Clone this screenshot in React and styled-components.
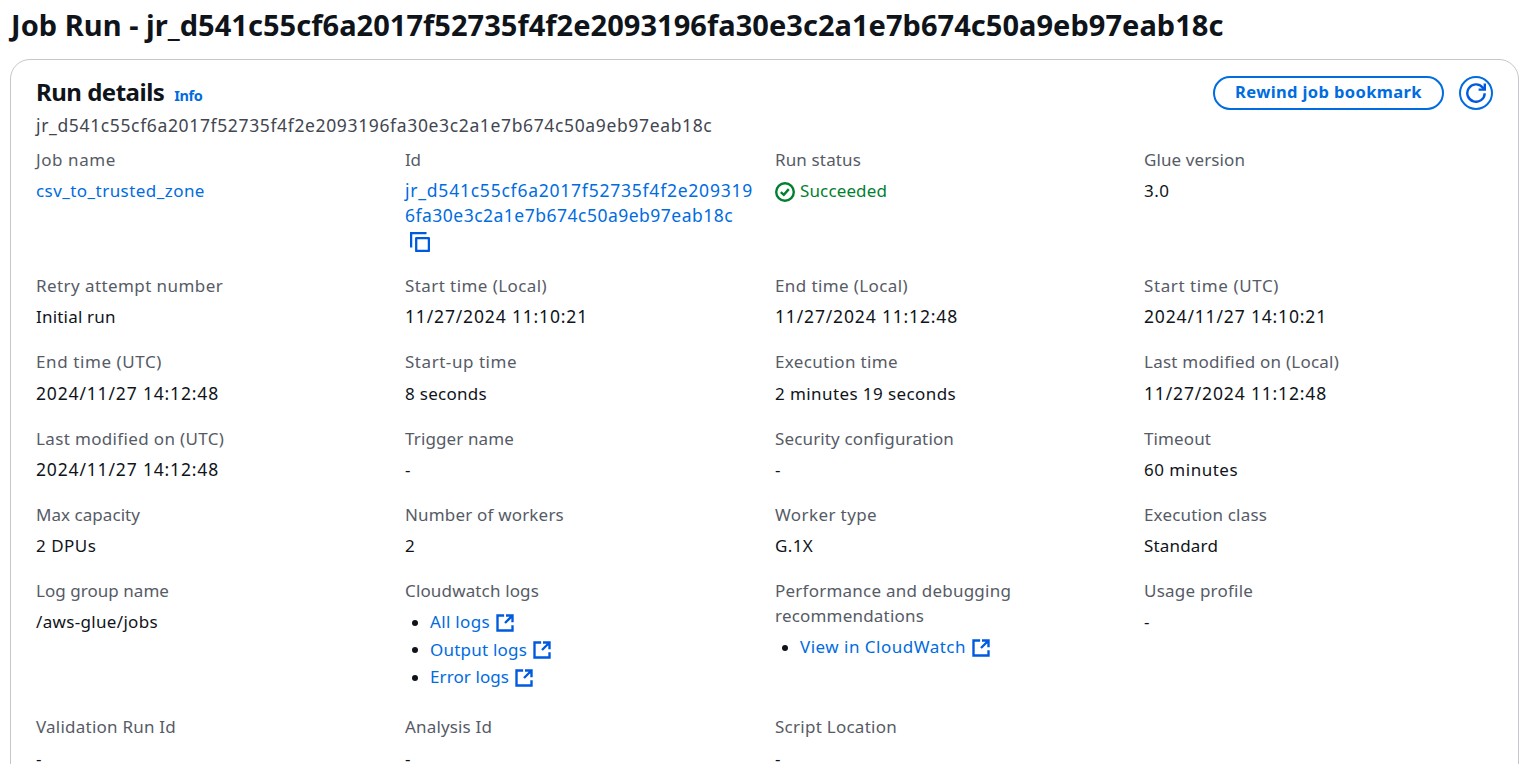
import React from 'react';
import styled, { createGlobalStyle, css } from 'styled-components';

const LINK = '#006ce0';
const ICON = '#005ae0';

const GlobalStyle = createGlobalStyle`
  * { box-sizing: border-box; }
  html, body { margin: 0; height: 100%; overflow: hidden; background: #fff; }
  body {
    font-family: "Noto Sans", "Open Sans", sans-serif;
    font-size: 17px;
    line-height: 25px;
    color: #0f141a;
  }
`;

const Page = styled.main`
  height: 764px;
  overflow: hidden;
  padding: 6px 1px 0 10px;
`;

const PageTitle = styled.h1`
  margin: 0 0 15px;
  padding-left: 1px;
  font-size: 29px;
  line-height: 38px;
  font-weight: 700;
  letter-spacing: 0.04px;
  white-space: nowrap;
`;

const Card = styled.section`
  height: 800px;
  border: 1px solid #c6c6cd;
  border-radius: 20px;
  padding: 16px 25px 0;
`;

const CardHeader = styled.header`
  display: flex;
  justify-content: space-between;
  align-items: flex-start;
`;

const HeadingRow = styled.div`
  display: flex;
  align-items: baseline;
  gap: 10px;
  height: 36px;
`;

const CardTitle = styled.h2`
  margin: 0;
  font-size: 24px;
  line-height: 32px;
  font-weight: 700;
  letter-spacing: -0.5px;
`;

const InfoLink = styled.a`
  font-size: 14.5px;
  font-weight: 700;
  letter-spacing: -0.4px;
  color: ${LINK};
`;

const Description = styled.p`
  margin: 0;
  font-size: 17.5px;
  line-height: 26px;
  height: 25px;
  color: #424650;
  letter-spacing: 0.64px;
`;

const Actions = styled.div`
  display: flex;
  gap: 15px;
`;

const PillButton = styled.button`
  display: flex;
  align-items: center;
  justify-content: center;
  width: ${p => (p.$round ? '34px' : '231px')};
  height: 34px;
  padding: ${p => (p.$round ? '0' : '0 0 3px')};
  border: 2px solid ${LINK};
  border-radius: 17px;
  background: #fff;
  color: ${LINK};
  font: 700 16.5px/25px "Noto Sans", sans-serif;
  letter-spacing: 0.38px;
  white-space: nowrap;
`;

const Details = styled.dl`
  display: grid;
  grid-template-columns: 349px 350px 349px 349px;
  gap: 20px;
  margin: 9.8px 0 0;
`;

const Label = styled.dt`
  margin-bottom: 6.25px;
  color: #565b66;
  white-space: nowrap;
`;

const Value = styled.dd`
  margin: 0;
  white-space: nowrap;
`;

const Line = styled.span`
  display: block;
  letter-spacing: ${p => p.$track || 0}px;
  ${p => p.$digits && css`font-size: 17.5px;`}
`;

const LinkText = styled.a`
  color: ${LINK};
`;

const CopyButton = styled.span`
  display: flex;
  align-items: center;
  height: 25px;
  padding: 3px 0 0 5px;
`;

const Status = styled.span`
  display: flex;
  align-items: center;
  gap: 5px;
  color: #00802f;
  letter-spacing: 0.13px;

  svg { margin-top: 2px; }
`;

const LinkList = styled.ul`
  list-style: none;
  margin: 0;
  padding: 0 0 5px;
  display: grid;
  row-gap: 2.5px;
`;

const LinkItem = styled.li`
  display: flex;
  align-items: center;
  height: 25px;

  &::before {
    content: "";
    width: 6px;
    height: 6px;
    margin: 2px 12px 0 7px;
    border-radius: 50%;
    background: #0f141a;
  }

  svg { margin: 2px 0 0 5px; }
`;

const Svg = styled.svg`
  flex: none;
  display: block;
  fill: none;
  stroke: ${p => p.$color || ICON};
  stroke-width: ${p => p.$stroke || 2.3};
`;

const RefreshIcon = () => (
  <Svg width="20" height="20" viewBox="0 0 20 20" $stroke={2.4}>
    <path d="M18.7 10.2A8.7 8.7 0 1 1 16.6 4.4L18.4 6.4" />
    <path d="M18.8 .4V6.6H12.6" />
  </Svg>
);

const CopyIcon = () => (
  <Svg width="20" height="20" viewBox="0 0 20 20">
    <path d="M16.5 1.1H1.1V15.5" />
    <path d="M6.2 6.2H18.9V18.9H6.2Z" strokeLinejoin="round" />
  </Svg>
);

const ExternalIcon = () => (
  <Svg width="20" height="20" viewBox="0 0 16 16" $stroke={1.9}>
    <path d="M7.3 2H2V14H14V9.8" />
    <path d="M8.8 2H14V7.4M8 8L14 2" />
  </Svg>
);

const SuccessIcon = () => (
  <Svg width="20" height="20" viewBox="0 0 20 20" $color="#00802f" $stroke={2.4}>
    <circle cx="10" cy="10" r="8.8" />
    <path d="M5.8 10.2L8.8 12.9L13.8 7.1" />
  </Svg>
);

const RUN_ID = 'jr_d541c55cf6a2017f52735f4f2e2093196fa30e3c2a1e7b674c50a9eb97eab18c';

const Text = ({ t }) => <Line $track={t[1]} $digits={t[2]}>{t[0]}</Line>;

const Links = ({ items }) => (
  <LinkList>
    {items.map(t => (
      <LinkItem key={t[0]}>
        <LinkText><Text t={t} /></LinkText>
        <ExternalIcon />
      </LinkItem>
    ))}
  </LinkList>
);

const date = text => [text, 0.84, true];

// Each entry: label lines and value; text is paired with its letter spacing.
const fields = [
  [[['Job name', 0.58]], <LinkText><Text t={['csv_to_trusted_zone', 0.45]} /></LinkText>],
  [[['Id', -0.2]], <>
    <LinkText>
      <Text t={[RUN_ID.slice(0, 35), 0.77, true]} />
      <Text t={[RUN_ID.slice(35), 0.49, true]} />
    </LinkText>
    <CopyButton><CopyIcon /></CopyButton>
  </>],
  [[['Run status', 0.14]], <Status><SuccessIcon />Succeeded</Status>],
  [[['Glue version', 0.1]], ['3.0', 0.5]],
  [[['Retry attempt number', 0.42]], ['Initial run', 0.2]],
  [[['Start time (Local)', 0.42]], date('11/27/2024 11:10:21')],
  [[['End time (Local)', 0.39]], date('11/27/2024 11:12:48')],
  [[['Start time (UTC)', 0.59]], date('2024/11/27 14:10:21')],
  [[['End time (UTC)', 0.59]], date('2024/11/27 14:12:48')],
  [[['Start-up time', 0.54]], ['8 seconds', 0.29]],
  [[['Execution time', 0.35]], ['2 minutes 19 seconds', 0.41]],
  [[['Last modified on (Local)', 0.23]], date('11/27/2024 11:12:48')],
  [[['Last modified on (UTC)', 0.35]], date('2024/11/27 14:12:48')],
  [[['Trigger name', 0.13]], ['-', 0]],
  [[['Security configuration', 0.14]], ['-', 0]],
  [[['Timeout', 0.11]], ['60 minutes', 0.5]],
  [[['Max capacity', 0.05]], ['2 DPUs', 0.5]],
  [[['Number of workers', 0.18]], ['2', 0]],
  [[['Worker type', 0.39]], ['G.1X', 0.35]],
  [[['Execution class', 0.17]], ['Standard', 0.17]],
  [[['Log group name', 0.04]], ['/aws-glue/jobs', 0.33]],
  [[['Cloudwatch logs', 0.15]],
    <Links items={[['All logs', 0.33], ['Output logs', 0.21], ['Error logs', 0.09]]} />],
  [[['Performance and debugging', 0.23], ['recommendations', 0.2]],
    <Links items={[['View in CloudWatch', 0.49]]} />],
  [[['Usage profile', 0.22]], ['-', 0]],
  [[['Validation Run Id', 0.23]], ['-', 0]],
  [[['Analysis Id', 0.16]], ['-', 0]],
  [[['Script Location', 0.26]], ['-', 0]],
];

export default function App() {
  return (
    <Page>
      <GlobalStyle />
      <PageTitle>Job Run - {RUN_ID}</PageTitle>
      <Card>
        <CardHeader>
          <div>
            <HeadingRow>
              <CardTitle>Run details</CardTitle>
              <InfoLink>Info</InfoLink>
            </HeadingRow>
            <Description>{RUN_ID}</Description>
          </div>
          <Actions>
            <PillButton>Rewind job bookmark</PillButton>
            <PillButton $round aria-label="Refresh"><RefreshIcon /></PillButton>
          </Actions>
        </CardHeader>
        <Details>
          {fields.map(([label, value]) => (
            <div key={label[0][0]}>
              <Label>{label.map(t => <Text key={t[0]} t={t} />)}</Label>
              <Value>{Array.isArray(value) ? <Text t={value} /> : value}</Value>
            </div>
          ))}
        </Details>
      </Card>
    </Page>
  );
}
